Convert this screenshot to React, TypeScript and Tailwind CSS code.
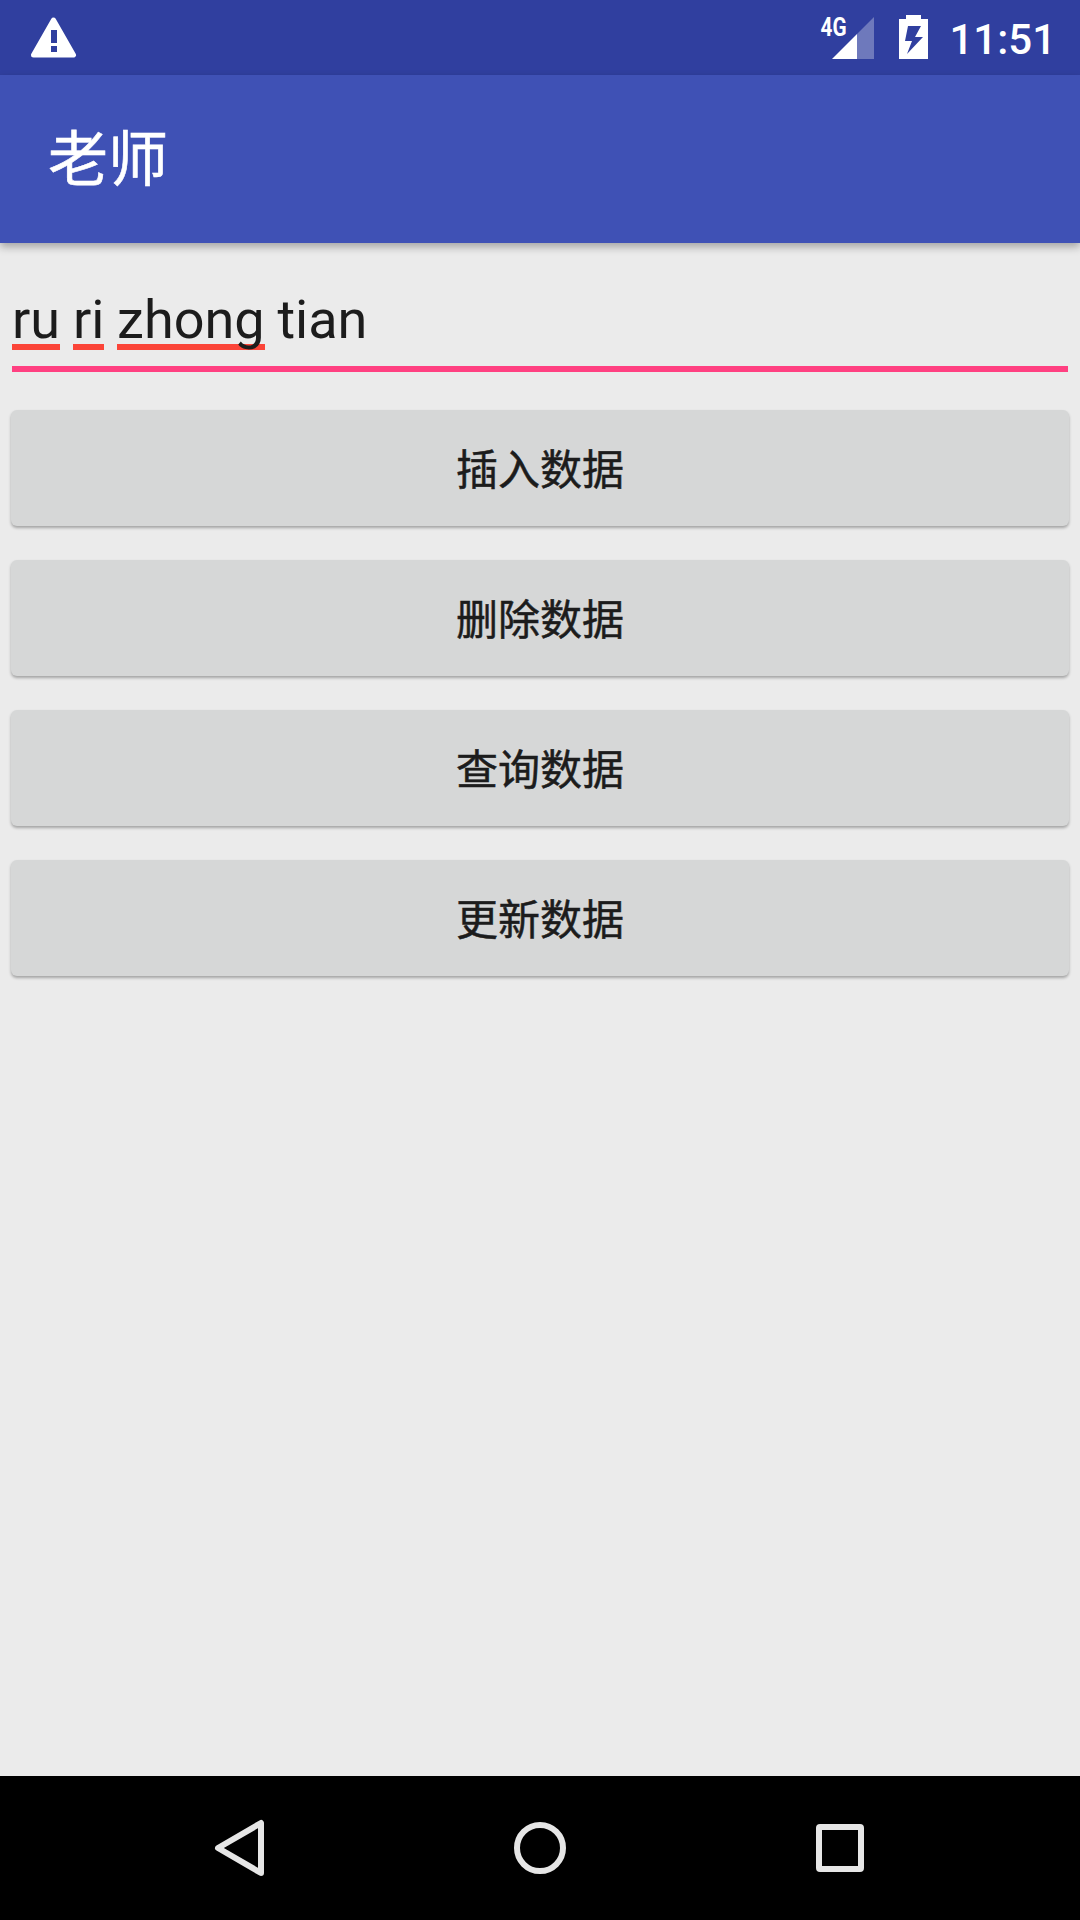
import { useState } from "react";

const actions = ["插入数据", "删除数据", "查询数据", "更新数据"];

// words the spell checker marks in red
const words = [
  { text: "ru", misspelled: true },
  { text: "ri", misspelled: true },
  { text: "zhong", misspelled: true },
  { text: "tian", misspelled: false },
];

function StatusBar() {
  return (
    <div className="flex h-[75px] shrink-0 items-center justify-between bg-[#303f9f] pl-[30px] pr-[24px]">
      <svg width="47" height="42" viewBox="0 0 47 42">
        <path
          d="M23.5 3 L43.5 38 H3.5 Z"
          fill="white"
          stroke="white"
          strokeWidth="5"
          strokeLinejoin="round"
        />
        <path d="M21 13h6v13h-6zM21 29h6v6h-6z" fill="#303f9f" />
      </svg>

      <div className="flex items-center">
        <svg width="112" height="75" viewBox="818 0 112 75">
          <text
            x="820.5"
            y="35.5"
            fill="white"
            textLength="26"
            lengthAdjust="spacingAndGlyphs"
            className="font-[Roboto] text-[26px] font-bold"
          >
            4G
          </text>
          <path d="M832 59 L857 34 V59 Z" fill="white" />
          <path d="M857 34 L874 17 V59 H857 Z" fill="white" fillOpacity="0.3" />
          <path
            fillRule="evenodd"
            fill="white"
            d="M906 15h15v4h7v40h-29V19h7zM908 26l-3 15h7l-5 13 16-17h-8l6-11z"
          />
        </svg>
        <span className="ml-[19px] pt-[5px] font-[Roboto] text-[42px] leading-[70px] font-medium text-white">
          11:51
        </span>
      </div>
    </div>
  );
}

function NavigationBar() {
  return (
    <div className="flex h-36 shrink-0 items-center justify-center gap-[240px] bg-black">
      <svg width="60" height="60" viewBox="0 0 60 60">
        <path
          d="M8 30 L51 5 V55 Z"
          fill="none"
          stroke="#e6e6e6"
          strokeWidth="6"
          strokeLinejoin="round"
        />
      </svg>
      <svg width="60" height="60" viewBox="0 0 60 60">
        <circle cx="30" cy="30" r="23" fill="none" stroke="#e6e6e6" strokeWidth="6" />
      </svg>
      <svg width="60" height="60" viewBox="0 0 60 60">
        <rect x="9" y="9" width="42" height="42" rx="1" fill="none" stroke="#e6e6e6" strokeWidth="6" strokeLinejoin="round" />
      </svg>
    </div>
  );
}

export default function App() {
  const [selected, setSelected] = useState("");

  return (
    <div className="flex h-[1920px] w-[1080px] flex-col overflow-hidden bg-[#ebebeb] font-[Roboto,'Noto_Sans_CJK_SC',sans-serif]">
      <StatusBar />

      {/* Toolbar */}
      <header className="relative flex h-[168px] shrink-0 items-center bg-[#3f51b5] pt-[4px] pl-12 shadow-[0_4px_8px_rgba(0,0,0,0.3)]">
        <h1 className="text-[60px] leading-[72px] text-white [-webkit-text-stroke:0.6px_white]">老师</h1>
      </header>

      <main className="flex grow flex-col px-[11px]">
        {/* Text field */}
        <div className="mx-px flex h-[129px] items-end border-b-[6px] border-[#ff4081] pb-4">
          <p className="flex gap-[12.8px] text-[54px] leading-[60px] text-[#1c1c1c]">
            {words.map((word) => (
              <span key={word.text} className="relative">
                {word.misspelled && (
                  <span className="absolute inset-x-0 bottom-0 h-1.5 bg-[#fb4438]" />
                )}
                <span className="relative">{word.text}</span>
              </span>
            ))}
          </p>
        </div>

        {/* Actions */}
        <div className="mt-[38px] flex flex-col gap-[34px]">
          {actions.map((action) => (
            <button
              key={action}
              onClick={() => setSelected(action)}
              aria-pressed={selected === action}
              className="h-[116px] rounded-[6px] bg-[#d6d7d7] pt-[5px] text-[42px] text-[#1c1c1c] shadow-[0_2px_3px_rgba(0,0,0,0.3)] [-webkit-text-stroke:0.5px_#1c1c1c]"
            >
              {action}
            </button>
          ))}
        </div>
      </main>

      <NavigationBar />
    </div>
  );
}
